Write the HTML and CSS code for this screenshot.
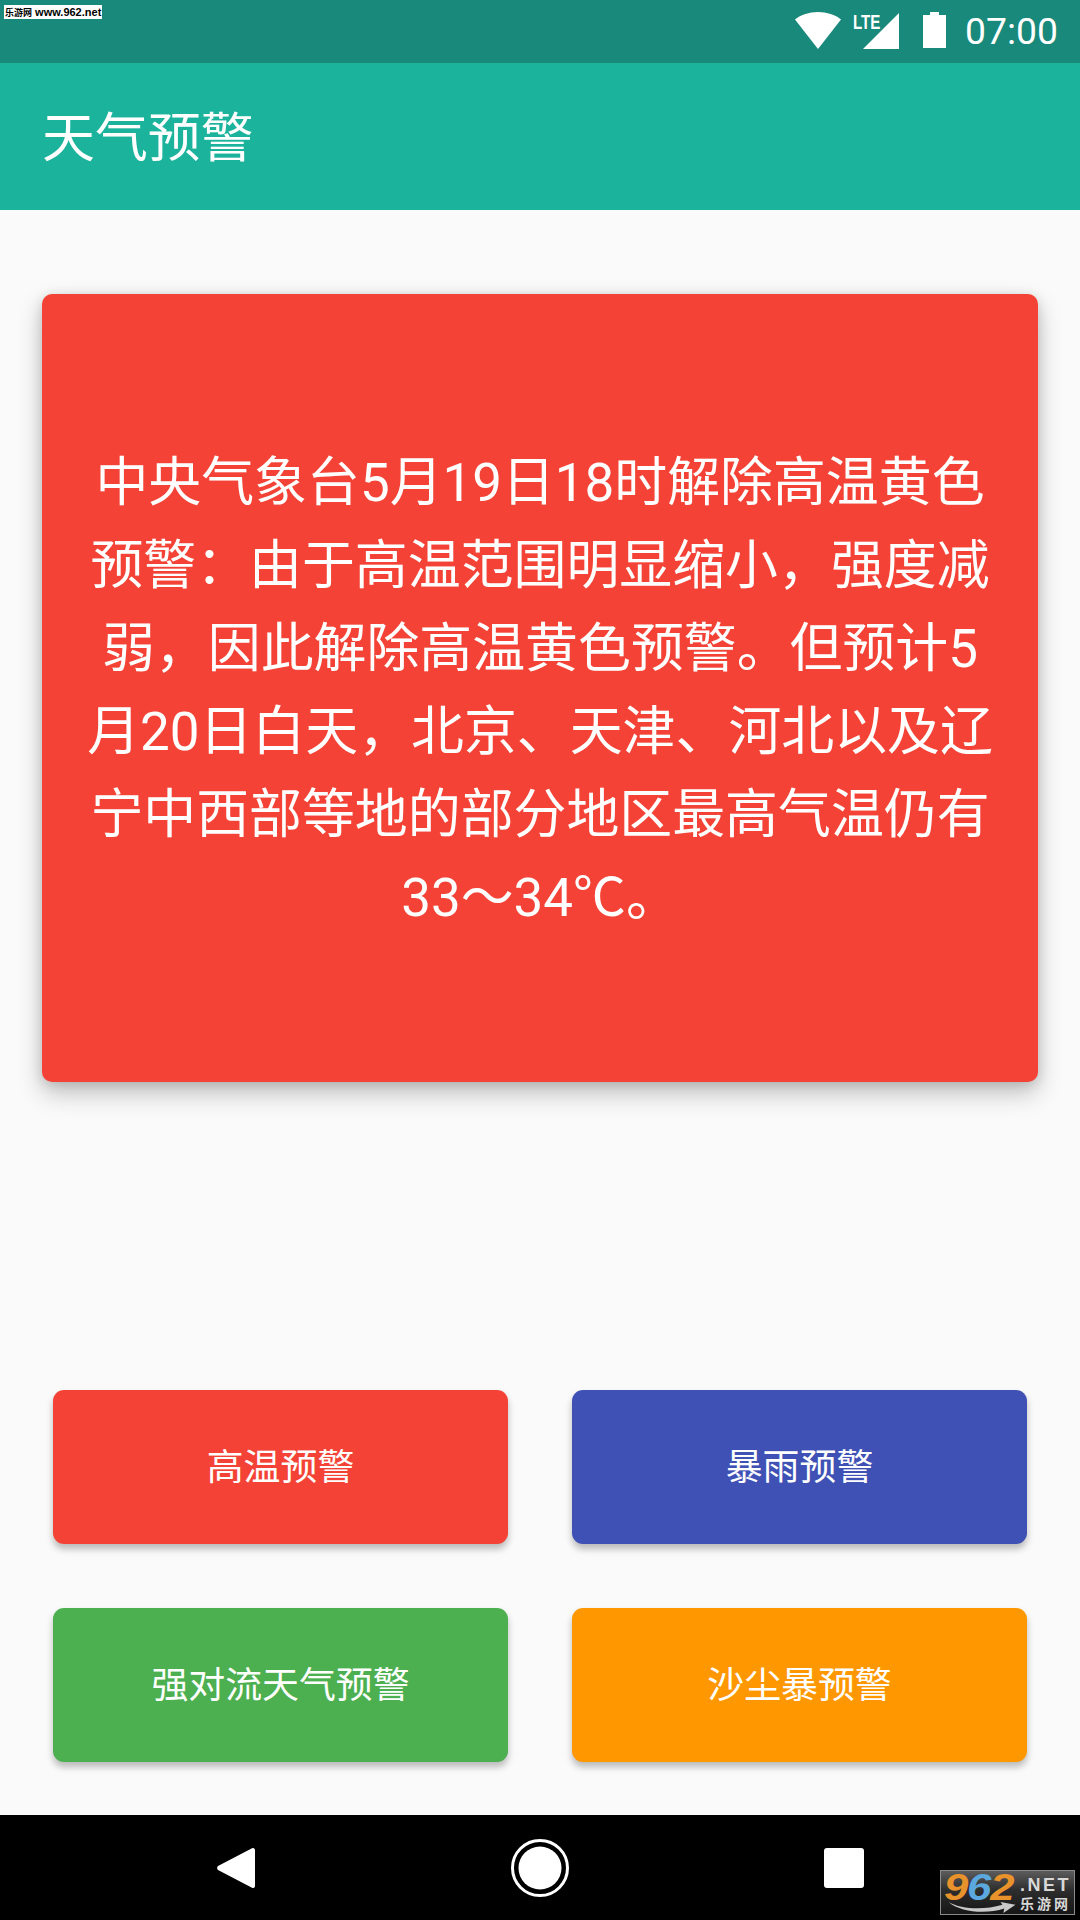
FILE: index.html
```html
<!DOCTYPE html>
<html lang="zh-CN">
<head>
<meta charset="utf-8">
<title>天气预警</title>
<link rel="stylesheet" href="styles.css">
</head>
<body>
<div class="screen">
  <div class="site-tag"><span class="site-tag-cn">乐游网</span> www.962.net</div>
  <header class="status-bar">
    <svg class="wifi" width="46" height="37" viewBox="0 0 46 37"><path d="M0 7.5C6 2.8 14 0 23 0s17 2.8 23 7.5L23 37z"/></svg>
    <div class="signal">
      <span class="lte">LTE</span>
      <svg width="36" height="36" viewBox="0 0 36 36"><path d="M36 0v36H0z"/></svg>
    </div>
    <svg class="battery" width="23" height="36" viewBox="0 0 23 36"><path d="M7 0h9v3h7v33H0V3h7z"/></svg>
    <span class="clock">07:00</span>
  </header>
  <div class="app-bar">天气预警</div>
  <main class="content">
    <section class="alert-card">
      <p class="alert-text">中央气象台5月19日18时解除高温黄色预警：由于高温范围明显缩小，强度减弱，因此解除高温黄色预警。但预计5月20日白天，北京、天津、河北以及辽宁中西部等地的部分地区最高气温仍有33～34℃。</p>
    </section>
    <div class="actions">
      <button class="action red">高温预警</button>
      <button class="action indigo">暴雨预警</button>
      <button class="action green">强对流天气预警</button>
      <button class="action orange">沙尘暴预警</button>
    </div>
  </main>
  <nav class="nav-bar">
    <svg width="38" height="42" viewBox="0 0 38 42"><path d="M35 1.2a2 2 0 0 1 3 1.5v36.6a2 2 0 0 1-3 1.5L1 23a3 3 0 0 1 0-4z" /></svg>
    <svg width="58" height="58" viewBox="0 0 58 58"><circle class="ring" cx="29" cy="29" r="27.5"/><circle cx="29" cy="29" r="21.5"/></svg>
    <svg width="40" height="40" viewBox="0 0 40 40"><rect width="40" height="40" rx="3"/></svg>
  </nav>
  <div class="site-logo">
    <span class="logo-num"><b class="o">9</b><b class="b">6</b><b class="o">2</b></span>
    <div class="logo-side">
      <span class="logo-net">.NET</span>
      <span class="logo-cn">乐游网</span>
    </div>
    <svg class="logo-swoosh" width="70" height="13" viewBox="0 0 72 14"><path d="M0 1c14 8 38 9 58 3l-2-3 16 3-13 9 1-5C42 14 14 13 0 1z"/></svg>
  </div>
</div>
</body>
</html>
```
FILE: styles.css
```css
* { box-sizing: border-box; }

html, body { margin: 0; padding: 0; }

body {
  font-family: Roboto, "Noto Sans CJK SC", sans-serif;
  color: #fff;
}

.screen {
  position: relative;
  display: flex;
  flex-direction: column;
  width: 1080px;
  height: 1920px;
  overflow: hidden;
  background: #fafafa;
}

/* status bar */
.status-bar {
  display: flex;
  align-items: flex-start;
  flex: none;
  justify-content: flex-end;
  height: 63px;
  padding: 12px 22px 0 0;
  background: #18897a;
}

.status-bar svg { display: block; fill: #fff; }

.signal {
  position: relative;
  margin: 1px 24px 0 22px;
  width: 36px;
  height: 36px;
}

.lte {
  position: absolute;
  left: -10px;
  top: -1px;
  font: 700 21px/20px "Liberation Sans Narrow", "Liberation Sans", sans-serif;
  transform: scaleX(.72);
  transform-origin: left top;
}

.clock {
  margin: -3px 0 0 19px;
  font-size: 37.3px;
  line-height: 44px;
}

.app-bar {
  flex: none;
  height: 147px;
  padding: 3px 0 0 42px;
  background: #1cb39d;
  font-size: 52.9px;
  line-height: 147px;
}

/* main content */
.content {
  display: flex;
  flex: 1;
  flex-direction: column;
  justify-content: space-between;
  padding: 84px 0 53px;
}

.alert-card {
  display: flex;
  align-items: center;
  height: 788px;
  margin: 0 42px;
  padding: 5px 40px 0;
  border-radius: 10px;
  background: #f44336;
  box-shadow: 0 11px 24px rgba(0, 0, 0, .24), 0 2px 12px rgba(0, 0, 0, .12);
}

.alert-text {
  margin: 0;
  font-size: 52.9px;
  line-height: 83px;
  text-align: center;
}

.actions {
  display: grid;
  grid-template-columns: 455px 455px;
  grid-auto-rows: 154px;
  gap: 64px;
  padding-left: 53px;
}

.action {
  padding: 0 0 6px;
  border: 0;
  border-radius: 11px;
  color: #fff;
  font: inherit;
  font-size: 36.9px;
  box-shadow: 0 5px 7px rgba(0, 0, 0, .26);
}

.red { background: #f44336; }
.indigo { background: #3f51b5; }
.green { background: #4caf50; }
.orange { background: #ff9800; }

/* navigation bar */
.nav-bar {
  display: flex;
  flex: none;
  align-items: center;
  height: 105px;
  padding: 0 216px 0 217px;
  justify-content: space-between;
  background: #000;
}

.nav-bar svg { display: block; fill: #fff; }

.nav-bar .ring { fill: none; stroke: #fff; stroke-width: 3; }

/* site marks laid over the screen */
.site-tag {
  position: absolute;
  left: 4px;
  top: 5px;
  width: 98px;
  height: 14px;
  padding-left: 1px;
  background: #fff;
  color: #000;
  font: 700 11px/14px "Liberation Sans", "Noto Sans CJK SC", sans-serif;
  white-space: nowrap;
}

.site-tag-cn { font-size: 9px; }

.site-logo {
  position: absolute;
  left: 940px;
  top: 1870px;
  display: flex;
  width: 135px;
  height: 45px;
  padding: 0 3px;
  border: 1px solid #8b8b8b;
  background: linear-gradient(#5c5c5c, #2d2d2d 45%, #161616);
}

.logo-num {
  width: 74px;
  font: italic 700 37px/33px "Liberation Sans", sans-serif;
  letter-spacing: -1px;
  transform: scaleX(1.18);
  transform-origin: left top;
}

.logo-num b { font-weight: 700; }
.o { color: #e8922c; }
.b { color: #5ba8de; }

.logo-side {
  display: flex;
  flex-direction: column;
  margin: 5px 0 0 2px;
  color: #d8d8d8;
}

.logo-net {
  font: 700 18px/18px "Liberation Sans", sans-serif;
  letter-spacing: 2.5px;
  white-space: nowrap;
}

.logo-cn {
  font: 700 14px/18px "Noto Sans CJK SC", sans-serif;
  letter-spacing: 3px;
  white-space: nowrap;
}

.logo-swoosh {
  position: absolute;
  left: 6px;
  top: 30px;
  fill: #c9c9c9;
}
```
